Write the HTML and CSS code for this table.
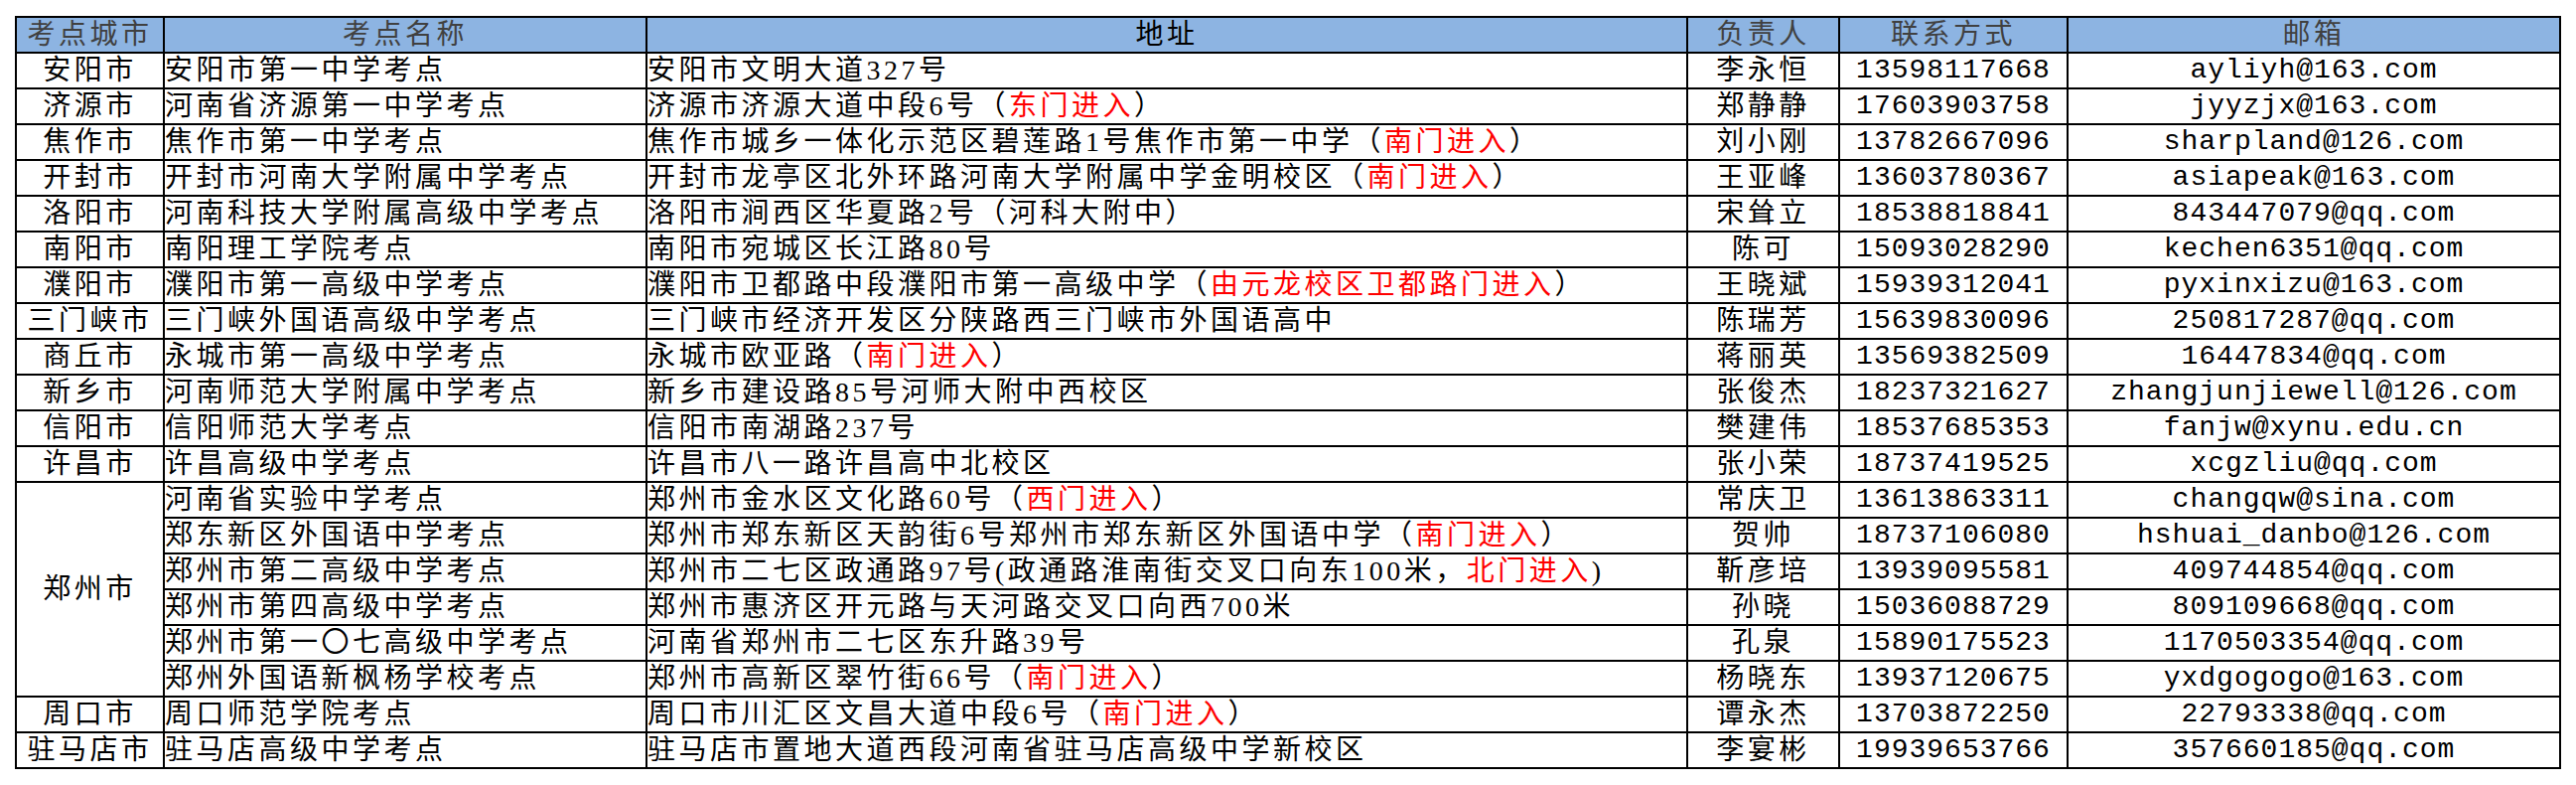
FILE: index.html
```html
<!DOCTYPE html>
<html lang="zh-CN">
<head>
<meta charset="utf-8">
<title>考点信息</title>
<link rel="stylesheet" href="styles.css">
</head>
<body>
<table class="sheet">
  <colgroup>
    <col class="w-city"><col class="w-name"><col class="w-addr"><col class="w-person"><col class="w-phone"><col class="w-mail">
  </colgroup>
  <thead>
    <tr>
      <th>考点城市</th><th>考点名称</th><th class="h-addr">地址</th><th>负责人</th><th>联系方式</th><th>邮箱</th>
    </tr>
  </thead>
  <tbody>
    <tr><td class="c">安阳市</td><td class="n">安阳市第一中学考点</td><td class="a">安阳市文明大道327号</td><td class="p">李永恒</td><td class="t">13598117668</td><td class="e">ayliyh@163.com</td></tr>
    <tr><td class="c">济源市</td><td class="n">河南省济源第一中学考点</td><td class="a">济源市济源大道中段6号（<span class="r">东门进入</span>）</td><td class="p">郑静静</td><td class="t">17603903758</td><td class="e">jyyzjx@163.com</td></tr>
    <tr><td class="c">焦作市</td><td class="n">焦作市第一中学考点</td><td class="a">焦作市城乡一体化示范区碧莲路1号焦作市第一中学（<span class="r">南门进入</span>）</td><td class="p">刘小刚</td><td class="t">13782667096</td><td class="e">sharpland@126.com</td></tr>
    <tr><td class="c">开封市</td><td class="n">开封市河南大学附属中学考点</td><td class="a">开封市龙亭区北外环路河南大学附属中学金明校区（<span class="r">南门进入</span>）</td><td class="p">王亚峰</td><td class="t">13603780367</td><td class="e">asiapeak@163.com</td></tr>
    <tr><td class="c">洛阳市</td><td class="n">河南科技大学附属高级中学考点</td><td class="a">洛阳市涧西区华夏路2号（河科大附中）</td><td class="p">宋耸立</td><td class="t">18538818841</td><td class="e">843447079@qq.com</td></tr>
    <tr><td class="c">南阳市</td><td class="n">南阳理工学院考点</td><td class="a">南阳市宛城区长江路80号</td><td class="p">陈可</td><td class="t">15093028290</td><td class="e">kechen6351@qq.com</td></tr>
    <tr><td class="c">濮阳市</td><td class="n">濮阳市第一高级中学考点</td><td class="a">濮阳市卫都路中段濮阳市第一高级中学（<span class="r">由元龙校区卫都路门进入</span>）</td><td class="p">王晓斌</td><td class="t">15939312041</td><td class="e">pyxinxizu@163.com</td></tr>
    <tr><td class="c">三门峡市</td><td class="n">三门峡外国语高级中学考点</td><td class="a">三门峡市经济开发区分陕路西三门峡市外国语高中</td><td class="p">陈瑞芳</td><td class="t">15639830096</td><td class="e">250817287@qq.com</td></tr>
    <tr><td class="c">商丘市</td><td class="n">永城市第一高级中学考点</td><td class="a">永城市欧亚路（<span class="r">南门进入</span>）</td><td class="p">蒋丽英</td><td class="t">13569382509</td><td class="e">16447834@qq.com</td></tr>
    <tr><td class="c">新乡市</td><td class="n">河南师范大学附属中学考点</td><td class="a">新乡市建设路85号河师大附中西校区</td><td class="p">张俊杰</td><td class="t">18237321627</td><td class="e">zhangjunjiewell@126.com</td></tr>
    <tr><td class="c">信阳市</td><td class="n">信阳师范大学考点</td><td class="a">信阳市南湖路237号</td><td class="p">樊建伟</td><td class="t">18537685353</td><td class="e">fanjw@xynu.edu.cn</td></tr>
    <tr><td class="c">许昌市</td><td class="n">许昌高级中学考点</td><td class="a">许昌市八一路许昌高中北校区</td><td class="p">张小荣</td><td class="t">18737419525</td><td class="e">xcgzliu@qq.com</td></tr>
    <tr><td class="c mid" rowspan="6">郑州市</td><td class="n">河南省实验中学考点</td><td class="a">郑州市金水区文化路60号（<span class="r">西门进入</span>）</td><td class="p">常庆卫</td><td class="t">13613863311</td><td class="e">changqw@sina.com</td></tr>
    <tr><td class="n">郑东新区外国语中学考点</td><td class="a">郑州市郑东新区天韵街6号郑州市郑东新区外国语中学（<span class="r">南门进入</span>）</td><td class="p">贺帅</td><td class="t">18737106080</td><td class="e">hshuai_danbo@126.com</td></tr>
    <tr><td class="n">郑州市第二高级中学考点</td><td class="a">郑州市二七区政通路97号(政通路淮南街交叉口向东100米，<span class="r">北门进入</span>)</td><td class="p">靳彦培</td><td class="t">13939095581</td><td class="e">409744854@qq.com</td></tr>
    <tr><td class="n">郑州市第四高级中学考点</td><td class="a">郑州市惠济区开元路与天河路交叉口向西700米</td><td class="p">孙晓</td><td class="t">15036088729</td><td class="e">809109668@qq.com</td></tr>
    <tr><td class="n">郑州市第一〇七高级中学考点</td><td class="a">河南省郑州市二七区东升路39号</td><td class="p">孔泉</td><td class="t">15890175523</td><td class="e">1170503354@qq.com</td></tr>
    <tr><td class="n">郑州外国语新枫杨学校考点</td><td class="a">郑州市高新区翠竹街66号（<span class="r">南门进入</span>）</td><td class="p">杨晓东</td><td class="t">13937120675</td><td class="e">yxdgogogo@163.com</td></tr>
    <tr><td class="c">周口市</td><td class="n">周口师范学院考点</td><td class="a">周口市川汇区文昌大道中段6号（<span class="r">南门进入</span>）</td><td class="p">谭永杰</td><td class="t">13703872250</td><td class="e">22793338@qq.com</td></tr>
    <tr><td class="c">驻马店市</td><td class="n">驻马店高级中学考点</td><td class="a">驻马店市置地大道西段河南省驻马店高级中学新校区</td><td class="p">李宴彬</td><td class="t">19939653766</td><td class="e">357660185@qq.com</td></tr>
  </tbody>
</table>
</body>
</html>
```

FILE: styles.css
```css
html, body {
  margin: 0;
  padding: 0;
  background: #ffffff;
}

body {
  padding: 16px 0 0 15px;
  font-family: "Liberation Serif", "Noto Sans CJK SC", serif;
  color: #000;
}

.sheet {
  border-collapse: collapse;
  table-layout: fixed;
  width: 2562px;
  font-size: 28px;
  letter-spacing: 3.5px;
}

.w-city { width: 149px; }
.w-name { width: 486px; }
.w-addr { width: 1048px; }
.w-person { width: 153px; }
.w-phone { width: 230px; }
.w-mail { width: 496px; }

.sheet th,
.sheet td {
  border: 2px solid #000;
  height: 34px;
  line-height: 34px;
  padding: 0;
  white-space: nowrap;
  overflow: hidden;
  vertical-align: bottom;
}

.sheet th {
  background: #8db4e2;
  color: #404040;
  font-weight: normal;
  text-align: center;
}

.sheet th.h-addr {
  color: #000;
}

.c { text-align: center; }
.c.mid { vertical-align: middle; }
.n { text-align: left; padding-left: 5px; }
.a { text-align: left; padding-left: 5px; }
.p { text-align: center; }

.t {
  text-align: center;
  font-family: "Liberation Mono", monospace;
  letter-spacing: 1px;
}

.e {
  text-align: center;
  font-family: "Liberation Mono", monospace;
  letter-spacing: 1px;
}

.r { color: #ff0000; }
```
